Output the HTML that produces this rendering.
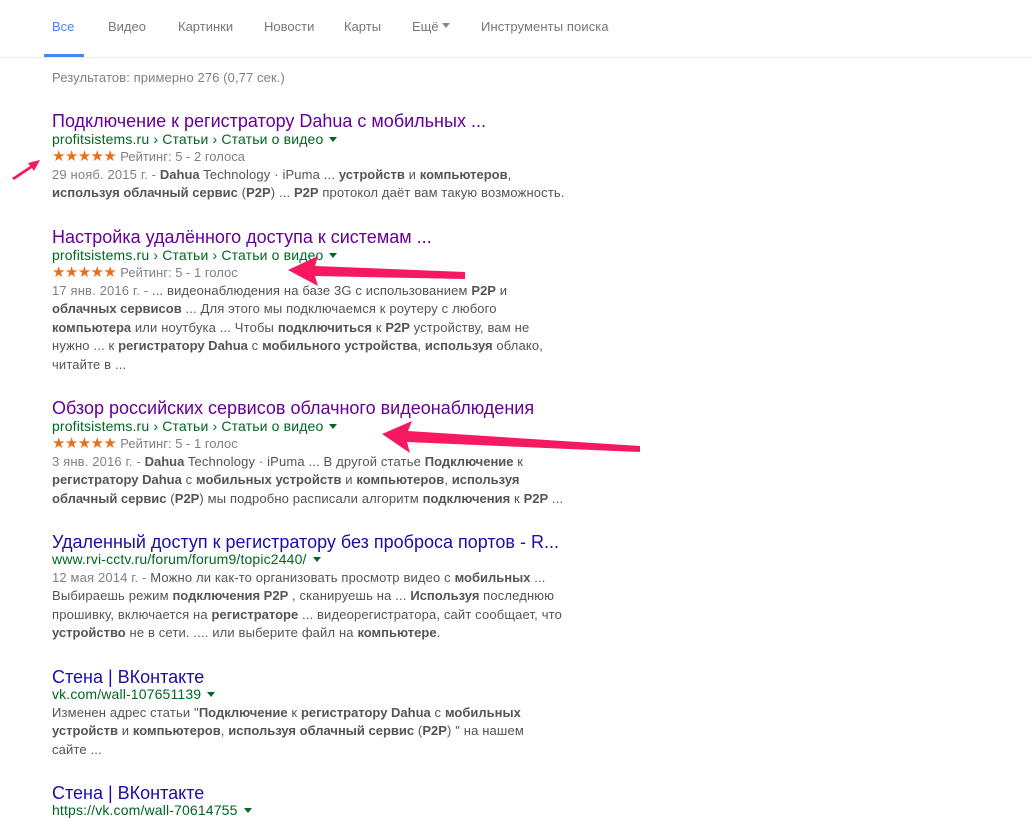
<!DOCTYPE html>
<html><head><meta charset="utf-8"><style>
body{margin:0;width:1033px;height:812px;background:#fff;position:relative;overflow:hidden;font-family:"Liberation Sans",Arial,sans-serif;}
.a{position:absolute;white-space:nowrap;}
.n{font-size:13px;color:#777;top:19px;}
.t{font-size:18px;left:52px;line-height:22px;letter-spacing:0px}
.v{color:#660099}.b{color:#1a0dab}
.u{font-size:14px;color:#006621;left:52px;line-height:18px;letter-spacing:0.15px}
.u i{display:inline-block;width:0;height:0;border-left:4px solid transparent;border-right:4px solid transparent;border-top:5px solid #006621;margin-left:6px;vertical-align:2px}
.r{font-size:13px;color:#808080;left:52px;line-height:18px}
.r s{text-decoration:none;color:#e7711b;font-size:15px;letter-spacing:-0.6px;margin-right:4px}
.s{font-size:13px;color:#545454;left:52px;line-height:18.4px;letter-spacing:0.15px}
.s b{color:#555;font-weight:bold;letter-spacing:0px}
.s .d{color:#808080}
</style></head><body>
<div class="a n" style="left:52px;color:#4285f4">Все</div>
<div class="a n" style="left:108px">Видео</div>
<div class="a n" style="left:178px">Картинки</div>
<div class="a n" style="left:264px">Новости</div>
<div class="a n" style="left:344px">Карты</div>
<div class="a n" style="left:412px">Ещё <span style="display:inline-block;border-left:4px solid transparent;border-right:4px solid transparent;border-top:5px solid #888;vertical-align:3px"></span></div>
<div class="a n" style="left:481px;letter-spacing:0.1px">Инструменты поиска</div>
<div class="a" style="left:44px;top:54px;width:40px;height:3px;background:#4285f4"></div>
<div class="a" style="left:0;top:57px;width:1033px;height:1px;background:#ebebeb"></div>
<div class="a" style="left:52px;top:70px;font-size:13px;color:#808080;letter-spacing:0.1px">Результатов: примерно 276 (0,77 сек.)</div>

<div class="a t v" style="top:110px">Подключение к регистратору Dahua с мобильных ...</div>
<div class="a u" style="top:130px">profitsistems.ru › Статьи › Статьи о видео<i></i></div>
<div class="a r" style="top:148px"><s>★★★★★</s>Рейтинг: 5 - 2 голоса</div>
<div class="a s" style="top:166px"><span class="d">29 нояб. 2015 г. - </span><b>Dahua</b> Technology · iPuma ... <b>устройств</b> и <b>компьютеров</b>,<br><b>используя облачный сервис</b> (<b>P2P</b>) ... <b>P2P</b> протокол даёт вам такую возможность.</div>

<div class="a t v" style="top:226px">Настройка удалённого доступа к системам ...</div>
<div class="a u" style="top:246px">profitsistems.ru › Статьи › Статьи о видео<i></i></div>
<div class="a r" style="top:264px"><s>★★★★★</s>Рейтинг: 5 - 1 голос</div>
<div class="a s" style="top:282px"><span class="d">17 янв. 2016 г. - </span>... видеонаблюдения на базе 3G с использованием <b>P2P</b> и<br><b>облачных сервисов</b> ... Для этого мы подключаемся к роутеру с любого<br><b>компьютера</b> или ноутбука ... Чтобы <b>подключиться</b> к <b>P2P</b> устройству, вам не<br>нужно ... к <b>регистратору Dahua</b> с <b>мобильного устройства</b>, <b>используя</b> облако,<br>читайте в ...</div>

<div class="a t v" style="top:397px">Обзор российских сервисов облачного видеонаблюдения</div>
<div class="a u" style="top:417px">profitsistems.ru › Статьи › Статьи о видео<i></i></div>
<div class="a r" style="top:435px"><s>★★★★★</s>Рейтинг: 5 - 1 голос</div>
<div class="a s" style="top:453px"><span class="d">3 янв. 2016 г. - </span><b>Dahua</b> Technology · iPuma ... В другой статье <b>Подключение</b> к<br><b>регистратору Dahua</b> с <b>мобильных устройств</b> и <b>компьютеров</b>, <b>используя</b><br><b>облачный сервис</b> (<b>P2P</b>) мы подробно расписали алгоритм <b>подключения</b> к <b>P2P</b> ...</div>

<div class="a t b" style="top:531px">Удаленный доступ к регистратору без проброса портов - R...</div>
<div class="a u" style="top:550px">www.rvi-cctv.ru/forum/forum9/topic2440/<i></i></div>
<div class="a s" style="top:569px"><span class="d">12 мая 2014 г. - </span>Можно ли как-то организовать просмотр видео с <b>мобильных</b> ...<br>Выбираешь режим <b>подключения P2P</b> , сканируешь на ... <b>Используя</b> последнюю<br>прошивку, включается на <b>регистраторе</b> ... видеорегистратора, сайт сообщает, что<br><b>устройство</b> не в сети. .... или выберите файл на <b>компьютере</b>.</div>

<div class="a t b" style="top:666px">Стена | ВКонтакте</div>
<div class="a u" style="top:685px">vk.com/wall-107651139<i></i></div>
<div class="a s" style="top:704px">Изменен адрес статьи "<b>Подключение</b> к <b>регистратору Dahua</b> с <b>мобильных</b><br><b>устройств</b> и <b>компьютеров</b>, <b>используя облачный сервис</b> (<b>P2P</b>) " на нашем<br>сайте ...</div>

<div class="a t b" style="top:782px">Стена | ВКонтакте</div>
<div class="a u" style="top:801px">https://vk.com/wall-70614755<i></i></div>

<svg class="a" style="left:0;top:0" width="1033" height="812">
<g fill="#f71960">
<polygon points="12,178 30,166 28,163 40,160 34,171 32,168 14,180"/>
<polygon points="288,270 318,256 315,266 465,272 465,279 315,276 318,286"/>
<polygon points="382,434 412,421 408,431 640,446 640,452 407,442 410,453"/>
</g>
</svg>
</body></html>
